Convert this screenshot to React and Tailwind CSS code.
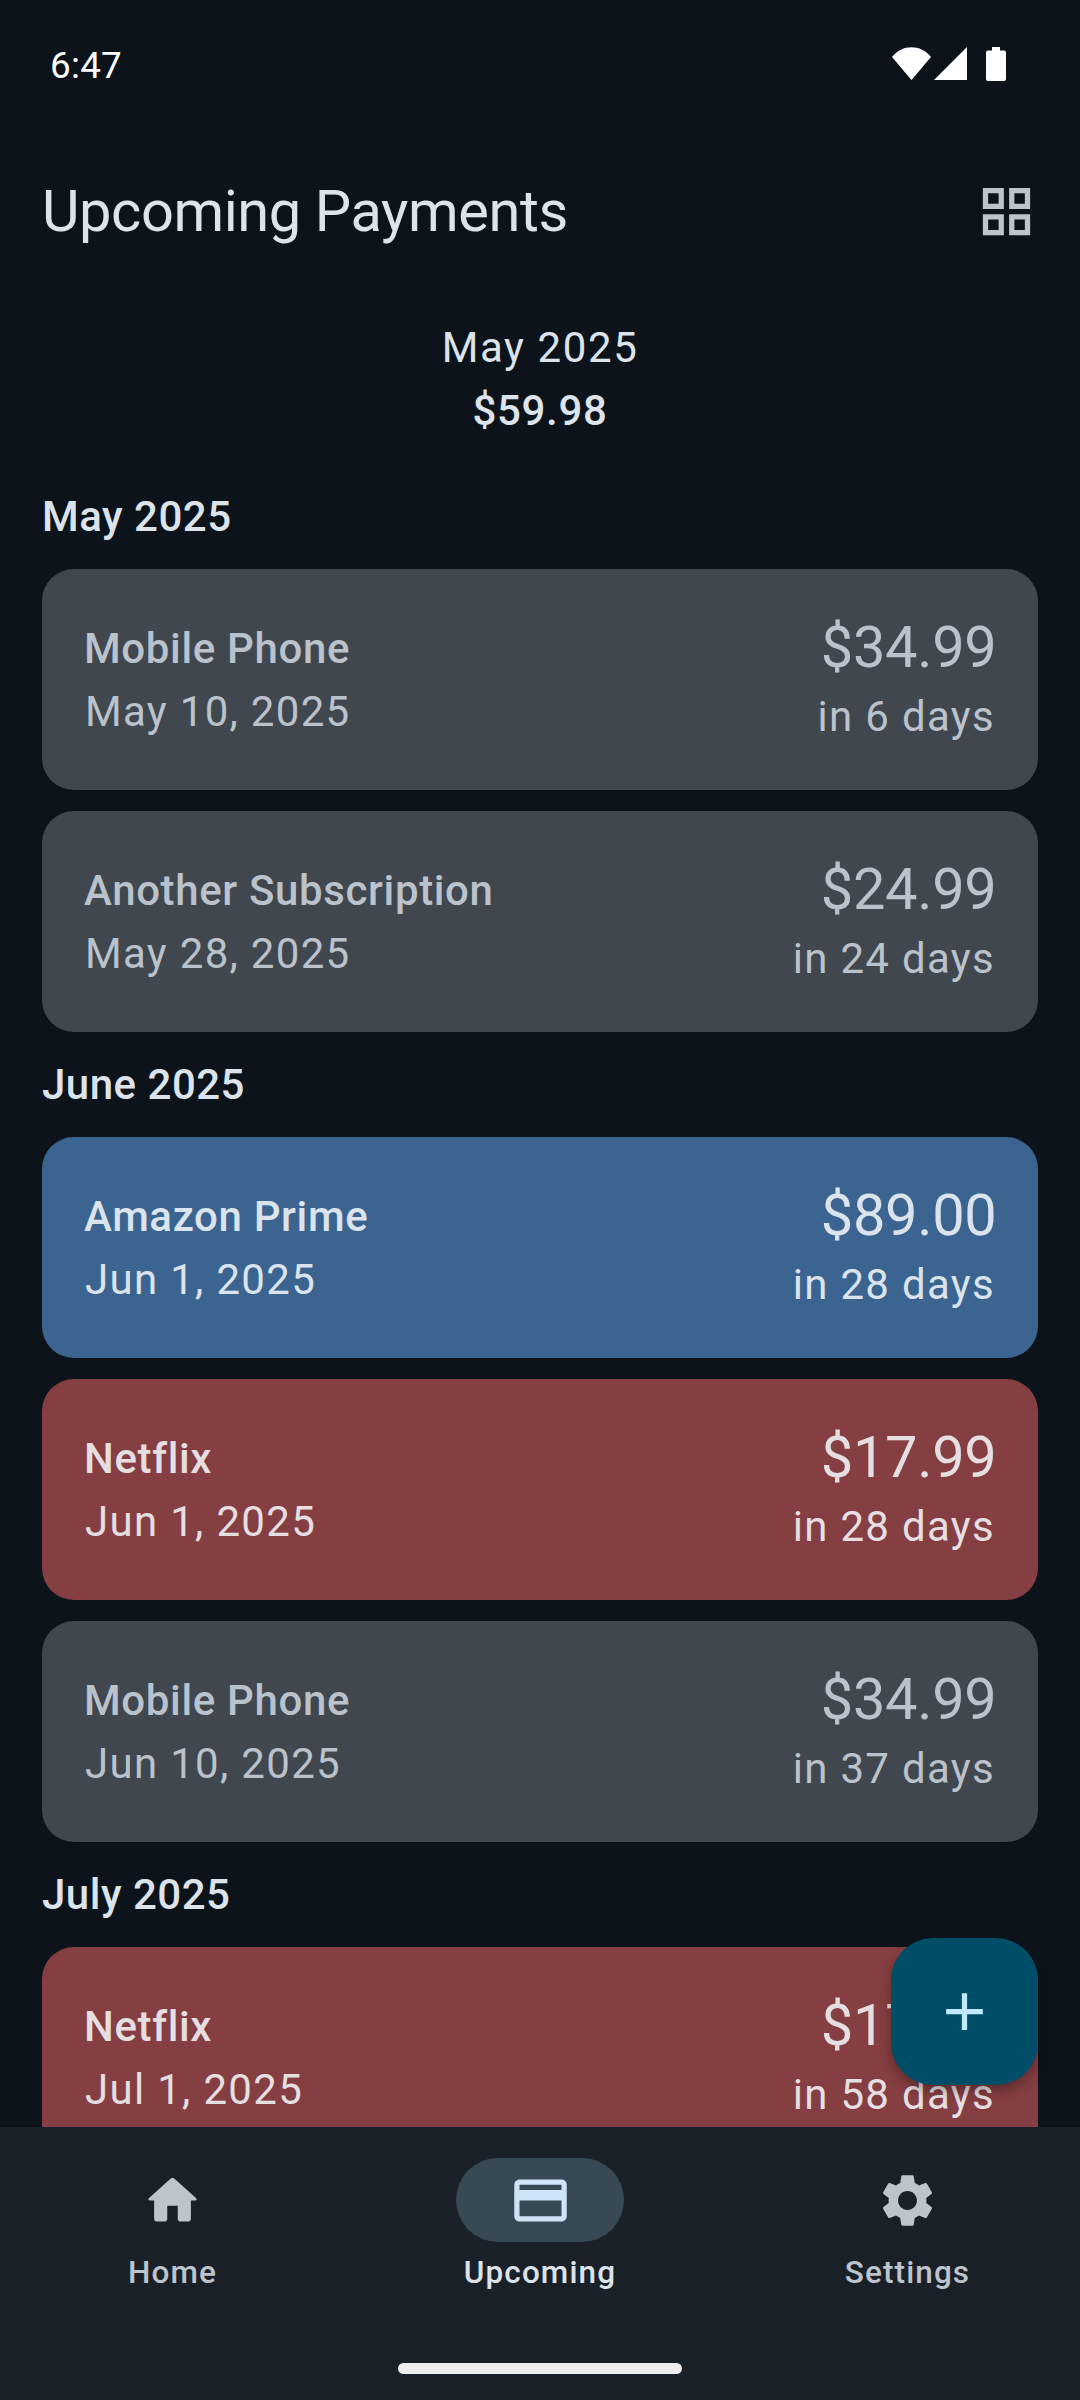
const months = [
  {
    name: 'May 2025',
    items: [
      { title: 'Mobile Phone', date: 'May 10, 2025', amount: '$34.99', due: 'in 6 days', tone: 'grey' },
      { title: 'Another Subscription', date: 'May 28, 2025', amount: '$24.99', due: 'in 24 days', tone: 'grey' },
    ],
  },
  {
    name: 'June 2025',
    items: [
      { title: 'Amazon Prime', date: 'Jun 1, 2025', amount: '$89.00', due: 'in 28 days', tone: 'blue' },
      { title: 'Netflix', date: 'Jun 1, 2025', amount: '$17.99', due: 'in 28 days', tone: 'red' },
      { title: 'Mobile Phone', date: 'Jun 10, 2025', amount: '$34.99', due: 'in 37 days', tone: 'grey' },
    ],
  },
  {
    name: 'July 2025',
    items: [
      { title: 'Netflix', date: 'Jul 1, 2025', amount: '$17.99', due: 'in 58 days', tone: 'red' },
    ],
  },
];

const tones = {
  grey: 'bg-[#41474e] text-[#bac2cb]',
  blue: 'bg-[#3b6491] text-[#dbe3ec]',
  red: 'bg-[#853e41] text-[#e6dfe2]',
};

const Icon = ({ d, className }) => (
  <svg viewBox="0 0 24 24" fill="currentColor" className={className}>
    <path d={d} />
  </svg>
);

const HOME =
  'M10 19v-5h4v5c0 .55.45 1 1 1h3c.55 0 1-.45 1-1v-7h1.7c.46 0 .68-.57.33-.87L12.67 3.6c-.38-.34-.96-.34-1.34 0l-8.36 7.53c-.34.3-.13.87.33.87H5v7c0 .55.45 1 1 1h3c.55 0 1-.45 1-1z';
const CARD =
  'M20 4H4c-1.11 0-1.99.89-1.99 2L2 18c0 1.11.89 2 2 2h16c1.11 0 2-.89 2-2V6c0-1.11-.89-2-2-2zm0 14H4v-6h16v6zm0-10H4V6h16v2z';
const GEAR =
  'M19.14 12.94c.04-.3.06-.61.06-.94 0-.32-.02-.64-.07-.94l2.03-1.58c.18-.14.23-.41.12-.61l-1.92-3.32c-.12-.22-.37-.29-.59-.22l-2.39.96c-.5-.38-1.03-.7-1.62-.94l-.36-2.54c-.04-.24-.24-.41-.48-.41h-3.84c-.24 0-.43.17-.47.41l-.36 2.54c-.59.24-1.13.57-1.62.94l-2.39-.96c-.22-.08-.47 0-.59.22L2.74 8.87c-.12.21-.08.47.12.61l2.03 1.58c-.05.3-.09.63-.09.94s.02.64.07.94l-2.03 1.58c-.18.14-.23.41-.12.61l1.92 3.32c.12.22.37.29.59.22l2.39-.96c.5.38 1.03.7 1.62.94l.36 2.54c.05.24.24.41.48.41h3.84c.24 0 .44-.17.47-.41l.36-2.54c.59-.24 1.13-.56 1.62-.94l2.39.96c.22.08.47 0 .59-.22l1.92-3.32c.12-.22.07-.47-.12-.61l-2.01-1.58zM12 15.6c-1.98 0-3.6-1.62-3.6-3.6s1.62-3.6 3.6-3.6 3.6 1.62 3.6 3.6-1.62 3.6-3.6 3.6z';
const GRID =
  'M3 3v8h8V3H3zm6 6H5V5h4v4zm-6 4v8h8v-8H3zm6 6H5v-4h4v4zm4-16v8h8V3h-8zm6 6h-4V5h4v4zm-6 4v8h8v-8h-8zm6 6h-4v-4h4v4z';
const PLUS = 'M19 13h-6v6h-2v-6H5v-2h6V5h2v6h6v2z';

const StatusBar = () => (
  <div className="flex h-[148px] items-start justify-between pl-[50px] pr-[74px] pt-[47px] text-white">
    <span className="mt-[1px] text-[36.75px] leading-[36px] tracking-[0.3px]">6:47</span>
    <div className="flex items-start">
      {/* wifi */}
      <svg viewBox="0 0 39 33" fill="currentColor" className="h-[33px] w-[39px]">
        <path d="M0 10 C10 -3 29 -3 39 10 L19.5 33 Z" />
      </svg>
      {/* signal */}
      <svg viewBox="0 0 33 33" fill="currentColor" className="ml-[3px] h-[33px] w-[33px]">
        <path d="M33 0 V33 H0 Z" />
      </svg>
      {/* battery */}
      <svg viewBox="0 0 20 34" fill="currentColor" className="ml-[19px] h-[34px] w-[20px]">
        <path d="M6 0 H14 V3.5 H18 Q20 3.5 20 5.5 V32 Q20 34 18 34 H2 Q0 34 0 32 V5.5 Q0 3.5 2 3.5 H6 Z" />
      </svg>
    </div>
  </div>
);

const PaymentCard = ({ item }) => (
  <div className={`flex h-[221px] items-center justify-between rounded-[32px] pl-[42px] pr-[42px] ${tones[item.tone]}`}>
    <div>
      <p className="text-[42px] font-medium leading-[63px] tracking-[0.64px]">{item.title}</p>
      <p className="ml-[1px] text-[42px] leading-[63px] tracking-[1.31px]">{item.date}</p>
    </div>
    <div className="text-right">
      <p className="mr-[-0.5px] text-[57.75px] leading-[73.5px] tracking-[-0.3px]">{item.amount}</p>
      <p className="mr-[1px] text-[42px] leading-[63px] tracking-[1.31px]">{item.due}</p>
    </div>
  </div>
);

const NavItem = ({ d, label, active }) => (
  <div className="flex w-[367.5px] shrink-0 flex-col items-center">
    <div className={`flex h-[84px] w-[168px] items-center justify-center rounded-full ${active ? 'bg-[#384956] text-[#d0e4f7]' : 'text-[#bdc4cc]'}`}>
      <Icon d={d} className="h-[63px] w-[63px]" />
    </div>
    <span className={`mt-[10px] text-[31.5px] font-medium leading-[42px] tracking-[1.1px] ${active ? 'text-[#dde3ea]' : 'text-[#bdc4cc]'}`}>
      {label}
    </span>
  </div>
);

export default function App() {
  return (
    <div className="relative flex h-[2400px] w-[1080px] flex-col overflow-hidden bg-[#0c131a] font-['Roboto',sans-serif]">
      <div className="min-h-0 flex-1 overflow-hidden">
        <StatusBar />

        <div className="flex h-[126px] items-center justify-between pl-[42px] pr-[42px]">
          <h1 className="text-[57.75px] font-normal tracking-[-0.4px] text-[#dde3ea]">Upcoming Payments</h1>
          <Icon d={GRID} className="h-[63px] w-[63px] text-[#bdc4cc]" />
        </div>

        <div className="mt-[42px] text-center text-[42px] leading-[63px] text-[#dde3ea]">
          <p className="tracking-[1.6px]">May 2025</p>
          <p className="font-medium tracking-[0.7px]">$59.98</p>
        </div>

        <div className="mt-[43px] flex flex-col gap-[21px] px-[42px]">
          {months.map((month) => (
            <section key={month.name} className="flex flex-col gap-[21px]">
              <h2 className="text-[42px] font-medium leading-[63px] tracking-[0.5px] text-[#dde3ea]">{month.name}</h2>
              {month.items.map((item) => (
                <PaymentCard key={item.title + item.date} item={item} />
              ))}
            </section>
          ))}
        </div>
      </div>

      <nav className="h-[273px] shrink-0 bg-[#1a2028] pt-[31px]">
        <div className="flex justify-center">
          <NavItem d={HOME} label="Home" />
          <NavItem d={CARD} label="Upcoming" active />
          <NavItem d={GEAR} label="Settings" />
        </div>
      </nav>

      {/* gesture bar */}
      <div className="absolute bottom-[26px] left-[398px] h-[11px] w-[284px] rounded-full bg-[#eeeeee]" />

      {/* add button */}
      <button className="absolute bottom-[315px] right-[42px] flex h-[147px] w-[147px] items-center justify-center rounded-[42px] bg-[#004d67] text-[#c0e8ff] shadow-[0_6px_12px_rgba(0,0,0,0.3)]">
        <Icon d={PLUS} className="h-[63px] w-[63px]" />
      </button>
    </div>
  );
}
